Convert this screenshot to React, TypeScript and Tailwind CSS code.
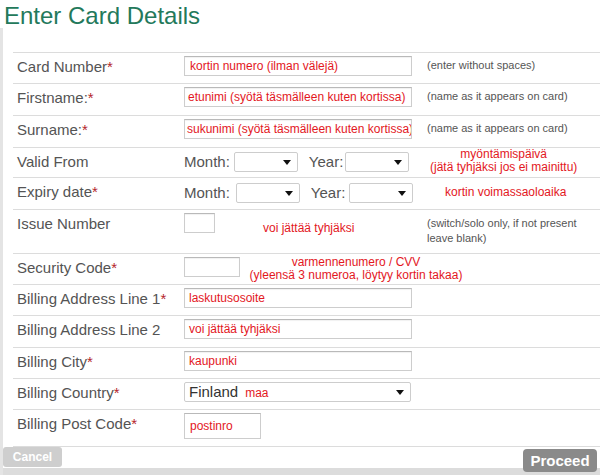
import type { ReactNode } from "react";

const RED = "text-[#e3171e]";

function Label({ text, req }: { text: string; req?: boolean }) {
  return (
    <div className="w-[171px] shrink-0 pl-[4px] mt-[2px] text-[15px] leading-[17px] text-[#545454] whitespace-nowrap">
      {text}
      {req && <span className="text-[#b5262c]">*</span>}
    </div>
  );
}

function Field({ value, w = "w-[228px]", pad = "pl-[5px]" }: { value?: string; w?: string; pad?: string }) {
  return (
    <div
      className={`${w} h-[20px] shrink-0 overflow-hidden whitespace-nowrap border border-[#cdcdcd] border-t-[#b9b9b9] bg-white ${pad} text-[12px] leading-[18px] ${RED} shadow-[inset_0_1px_1px_rgba(0,0,0,0.06)]`}
    >
      {value}
    </div>
  );
}

function Arrow() {
  return (
    <svg width="8" height="5" viewBox="0 0 8 5" className="shrink-0">
      <path d="M0 0h8L4 5z" fill="#111" />
    </svg>
  );
}

function Select({ w, children }: { w: string; children?: ReactNode }) {
  return (
    <div
      className={`${w} h-[20px] shrink-0 flex items-center justify-between border border-[#cdcdcd] rounded-[2px] bg-white pl-[4px] pr-[6px]`}
    >
      <div className="flex items-baseline gap-[7px] whitespace-nowrap">{children}</div>
      <Arrow />
    </div>
  );
}

function Hint({ children }: { children: ReactNode }) {
  return <div className="mt-[3px] text-[11px] leading-[13px] text-[#555]">{children}</div>;
}

function Row({ h, children, last }: { h: string; children: ReactNode; last?: boolean }) {
  return (
    <div className={`${h} flex items-start border-t border-[#dcdcdc] pt-[3px] ${last ? "border-b" : ""}`}>
      {children}
    </div>
  );
}

export default function App() {
  return (
    <div className="w-[600px] h-[475px] overflow-hidden bg-white font-['Liberation_Sans',Arial,sans-serif]">
      <h1 className="h-[28px] pl-[4px] pt-[2px] text-[24px] leading-[28px] text-[#23795b]">Enter Card Details</h1>

      <div className="h-[447px] flex flex-col border-l-[3px] border-[#e4e4e4]">
        <div className="pl-[10px] pt-[24px]">
          <Row h="h-[31px]">
            <Label text="Card Number" req />
            <div className="w-[243px] shrink-0">
              <Field value="kortin numero (ilman välejä)" />
            </div>
            <Hint>(enter without spaces)</Hint>
          </Row>

          <Row h="h-[32px]">
            <Label text="Firstname:" req />
            <div className="w-[243px] shrink-0">
              <Field value="etunimi (syötä täsmälleen kuten kortissa)" pad="pl-[3px]" />
            </div>
            <Hint>(name as it appears on card)</Hint>
          </Row>

          <Row h="h-[32px]">
            <Label text="Surname:" req />
            <div className="w-[243px] shrink-0">
              <Field value="sukunimi (syötä täsmälleen kuten kortissa)" pad="pl-[2px]" />
            </div>
            <Hint>(name as it appears on card)</Hint>
          </Row>

          <Row h="h-[30px]">
            <Label text="Valid From" />
            <div className="flex items-center text-[15px] text-[#545454]">
              <span>Month:</span>
              <div className="ml-[4px]">
                <Select w="w-[64px]" />
              </div>
              <span className="ml-[11px]">Year:</span>
              <div className="ml-[2px]">
                <Select w="w-[64px]" />
              </div>
            </div>
            <div className={`flex-1 pr-[2px] -mt-[3px] text-center text-[12px] leading-[13px] ${RED}`}>
              myöntämispäivä
              <br />
              (jätä tyhjäksi jos ei mainittu)
            </div>
          </Row>

          <Row h="h-[32px]">
            <Label text="Expiry date" req />
            <div className="flex items-center mt-[1px] text-[15px] text-[#545454]">
              <span>Month:</span>
              <div className="ml-[6px]">
                <Select w="w-[64px]" />
              </div>
              <span className="ml-[11px]">Year:</span>
              <div className="ml-[4px]">
                <Select w="w-[64px]" />
              </div>
            </div>
            <div className={`flex-1 pr-[2px] mt-[4px] text-center text-[12px] leading-[14px] ${RED}`}>
              kortin voimassaoloaika
            </div>
          </Row>

          <Row h="h-[44px]">
            <Label text="Issue Number" />
            <div className="w-[243px] shrink-0 flex items-start">
              <Field w="w-[31px]" />
              <span className={`ml-[48px] mt-[8px] text-[12px] leading-[14px] whitespace-nowrap ${RED}`}>
                voi jättää tyhjäksi
              </span>
            </div>
            <div className="mt-[3px] text-[11px] leading-[15px] text-[#555]">
              (switch/solo only, if not present
              <br />
              leave blank)
            </div>
          </Row>

          <Row h="h-[31px]">
            <Label text="Security Code" req />
            <Field w="w-[56px]" />
            <div className={`w-[232px] shrink-0 -mt-[1px] text-center text-[12px] leading-[13px] whitespace-nowrap ${RED}`}>
              varmennenumero / CVV
              <br />
              (yleensä 3 numeroa, löytyy kortin takaa)
            </div>
          </Row>

          <Row h="h-[31px]">
            <Label text="Billing Address Line 1" req />
            <Field value="laskutusosoite" pad="pl-[4px]" />
          </Row>

          <Row h="h-[32px]">
            <Label text="Billing Address Line 2" />
            <Field value="voi jättää tyhjäksi" pad="pl-[4px]" />
          </Row>

          <Row h="h-[31px]">
            <Label text="Billing City" req />
            <Field value="kaupunki" pad="pl-[4px]" />
          </Row>

          <Row h="h-[31px]">
            <Label text="Billing Country" req />
            <Select w="w-[227px]">
              <span className="text-[15px] text-[#333]">Finland</span>
              <span className={`text-[12px] ${RED}`}>maa</span>
            </Select>
          </Row>

          <Row h="h-[38px]" last>
            <Label text="Billing Post Code" req />
            <div className={`w-[77px] h-[26px] border border-[#cdcdcd] border-t-[#b9b9b9] bg-white pl-[5px] text-[12px] leading-[24px] ${RED}`}>
              postinro
            </div>
          </Row>
        </div>

        <div className="flex-1 flex items-start justify-between bg-[linear-gradient(to_bottom,#ffffff_21px,#dcdcdc_21px)]">
          <button className="w-[59px] h-[20px] rounded-[3px] bg-[#cecece] text-[12px] font-bold leading-[20px] text-white">
            Cancel
          </button>
          <button className="mt-[2px] mr-[3px] w-[74px] h-[23px] rounded-[4px] bg-[#8a8a8a] text-[15px] font-bold leading-[23px] text-white">
            Proceed
          </button>
        </div>
      </div>
    </div>
  );
}
